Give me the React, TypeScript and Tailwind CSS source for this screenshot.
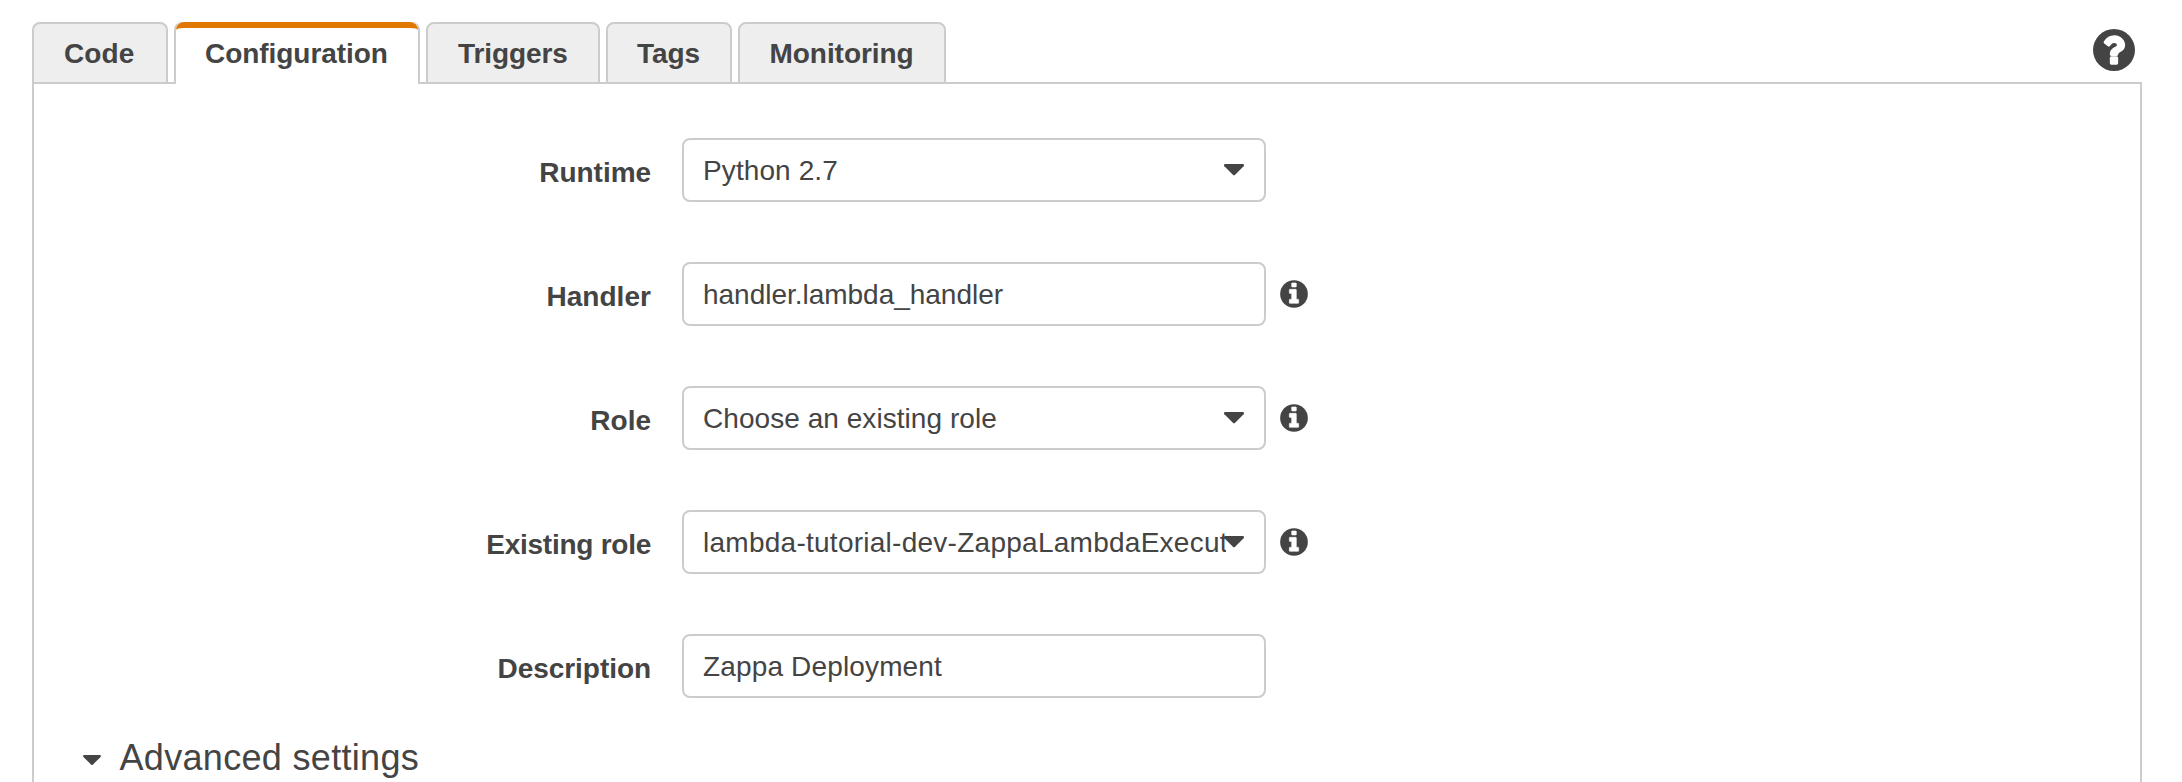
import React from "react";

function InfoIcon() {
  return (
    <svg viewBox="128 128 1536 1536" className="h-7 w-7 shrink-0">
      <circle cx="896" cy="896" r="760" className="fill-[#444]" />
      <g className="fill-white stroke-white" strokeWidth="30">
        <path d="M1152 1376v-160q0-14-9-23t-23-9h-96v-512q0-14-9-23t-23-9h-320q-14 0-23 9t-9 23v160q0 14 9 23t23 9h96v320h-96q-14 0-23 9t-9 23v160q0 14 9 23t23 9h448q14 0 23-9t9-23z" />
        <path d="M1024 480v-160q0-14-9-23t-23-9h-192q-14 0-23 9t-9 23v160q0 14 9 23t23 9h192q14 0 23-9t9-23z" />
      </g>
    </svg>
  );
}

function HelpIcon() {
  return (
    <svg viewBox="128 128 1536 1536" className="h-[42px] w-[42px] shrink-0">
      <circle cx="896" cy="896" r="768" className="fill-[#444]" />
      <g className="fill-white stroke-white" strokeWidth="48">
        <path d="M1024 1376v-192q0-14-9-23t-23-9h-192q-14 0-23 9t-9 23v192q0 14 9 23t23 9h192q14 0 23-9t9-23z" />
        <path d="M1280 704q0-88-55.5-163t-138.5-116-170-41q-243 0-371 213-15 24 8 42l132 100q7 6 19 6 16 0 25-12 53-68 86-92 34-24 86-24 48 0 85.5 26t37.5 59q0 38-20 61t-68 45q-63 28-115.5 86.5t-52.5 125.5v36q0 14 9 23t23 9h192q14 0 23-9t9-23q0-19 21.5-49.5t54.5-49.5q32-18 49-28.5t46-35 44.5-48 28-60.5 12.5-81z" />
      </g>
    </svg>
  );
}

function Caret({ className }: { className: string }) {
  return (
    <svg viewBox="384 640 1024 576" className={"shrink-0 fill-[#444] " + className}>
      <path d="M1408 704q0 26-19 45l-448 448q-19 19-45 19t-45-19l-448-448q-19-19-19-45t19-45 45-19h896q26 0 45 19t19 45z" />
    </svg>
  );
}

const tabs = [
  { label: "Code", box: "w-[136px] pl-[30px] tracking-[0.1px]" },
  { label: "Configuration", box: "w-[246px]", active: true },
  { label: "Triggers", box: "w-[174px] pl-[30px] tracking-[-0.1px]" },
  { label: "Tags", box: "w-[126px] pl-[29px] tracking-[-0.1px]" },
  { label: "Monitoring", box: "w-[208px] pl-[29.5px] tracking-[-0.05px]" },
];

const fields = [
  { label: "Runtime", value: "Python 2.7", select: true, info: false, lt: "tracking-[-0.05px]", tracking: "tracking-[0.1px]" },
  { label: "Handler", value: "handler.lambda_handler", select: false, info: true, lt: "tracking-[0.05px]", tracking: "tracking-[-0.02px]" },
  { label: "Role", value: "Choose an existing role", select: true, info: true, lt: "tracking-[0px]", tracking: "tracking-[0.05px]" },
  { label: "Existing role", value: "lambda-tutorial-dev-ZappaLambdaExecut", select: true, info: true, lt: "tracking-[-0.25px]", tracking: "tracking-[0.26px]" },
  { label: "Description", value: "Zappa Deployment", select: false, info: false, lt: "tracking-[-0.05px]", tracking: "tracking-[0.15px]" },
];

export default function App() {
  return (
    <div className="flex h-[782px] w-[2182px] flex-col overflow-hidden bg-white pl-8 pr-10 pt-[22px] font-['Liberation_Sans',Arial,sans-serif] text-[28px] text-[#444]">
      <div className="z-10 -mb-0.5 flex h-[62px] shrink-0 justify-between">
        <div className="flex gap-1.5 font-bold leading-[58px]">
          {tabs.map((t) =>
            t.active ? (
              <div key={t.label} className={"h-[62px] rounded-t-[8px] border-x-2 border-[#ccc] bg-white " + t.box}>
                <div className="h-[62px] rounded-t-[8px] border-t-[6px] border-[#e07700] bg-white pl-[29px] tracking-[-0.05px]">
                  <div className="-mt-[3px]">{t.label}</div>
                </div>
              </div>
            ) : (
              <div key={t.label} className={"h-[62px] rounded-t-[8px] border-2 border-[#ccc] bg-[#eee] pt-px " + t.box}>
                {t.label}
              </div>
            )
          )}
        </div>
        <div className="pr-[7px] pt-[7px]">
          <HelpIcon />
        </div>
      </div>
      <div className="flex flex-1 flex-col border-x-2 border-t-2 border-[#ccc] pt-[54px]">
        <div className="flex flex-col gap-[60px]">
          {fields.map((f) => (
            <div key={f.label} className="flex h-16 items-center">
              <div className={"w-[617px] pt-1.5 text-right font-bold leading-[58px] " + f.lt}>{f.label}</div>
              <div className="ml-[31px] flex h-16 w-[584px] items-center rounded-[8px] border-2 border-[#ccc] pl-[19px]">
                <div className={"w-[523px] shrink-0 overflow-hidden whitespace-nowrap pt-0.5 leading-[58px] " + f.tracking}>{f.value}</div>
                {f.select && <Caret className="-ml-0.5 h-[11.25px] w-5" />}
              </div>
              {f.info && (
                <div className="ml-3.5">
                  <InfoIcon />
                </div>
              )}
            </div>
          ))}
        </div>
        <div className="mt-[38px] flex items-center pl-[49px]">
          <Caret className="mt-[4px] h-[10px] w-[18px]" />
          <span className="ml-[18.5px] whitespace-nowrap text-[36px] leading-[44px] tracking-[0.32px]">Advanced settings</span>
        </div>
      </div>
    </div>
  );
}
